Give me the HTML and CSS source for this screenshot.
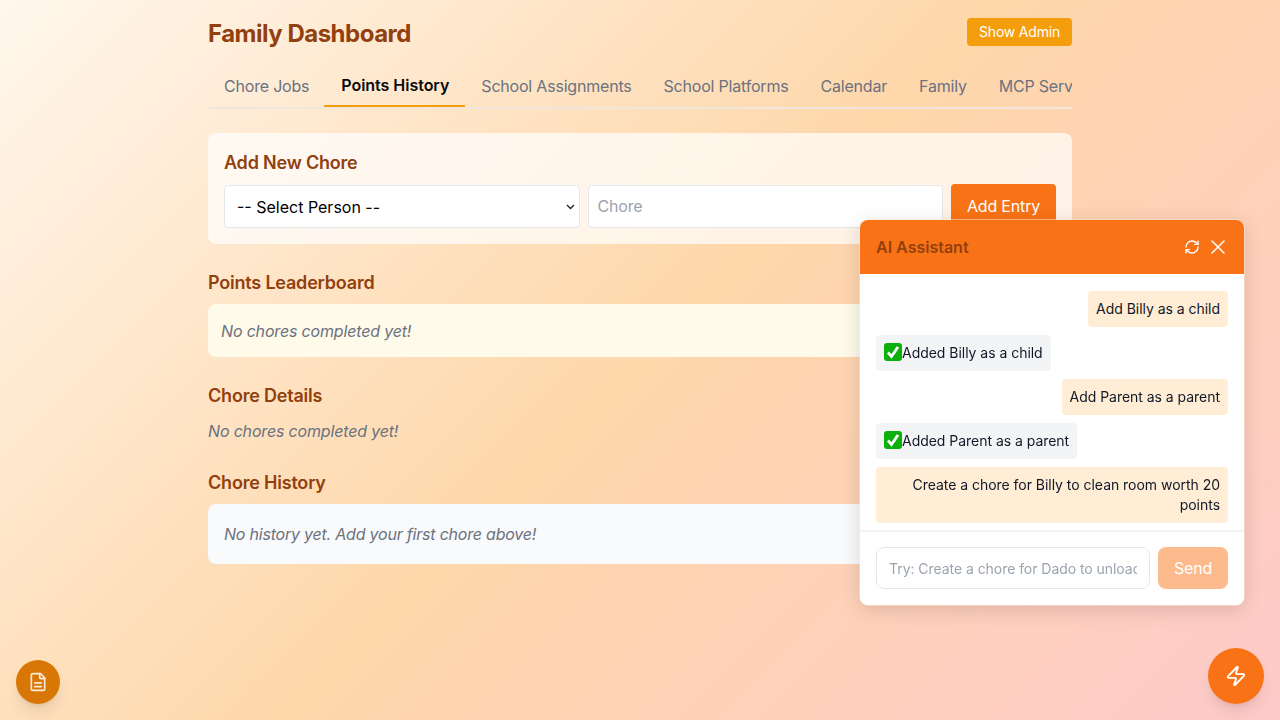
FILE: index.html
```html
<!DOCTYPE html>
<html lang="en">
<head>
    <meta charset="UTF-8">
    <meta name="viewport" content="width=device-width, initial-scale=1.0">
    <title>Family Dashboard</title>
    <link rel="stylesheet" href="styles.css">
</head>
<body>
    <div class="container">
        <header class="top">
            <h1>Family Dashboard</h1>
            <button class="admin-btn">Show Admin</button>
        </header>

        <nav class="tabs">
            <a class="tab">Chore Jobs</a>
            <a class="tab active">Points History</a>
            <a class="tab">School Assignments</a>
            <a class="tab">School Platforms</a>
            <a class="tab">Calendar</a>
            <a class="tab">Family</a>
            <a class="tab">MCP Servers</a>
        </nav>

        <section class="add-card">
            <h3>Add New Chore</h3>
            <form class="add-form">
                <select class="person-select">
                    <option>-- Select Person --</option>
                </select>
                <input class="chore-input" type="text" placeholder="Chore">
                <button class="add-btn" type="button">Add Entry</button>
            </form>
        </section>

        <section class="block">
            <h3>Points Leaderboard</h3>
            <div class="leaderboard"><em>No chores completed yet!</em></div>
        </section>

        <section class="block details-block">
            <h3>Chore Details</h3>
            <p class="empty"><em>No chores completed yet!</em></p>
        </section>

        <section class="block">
            <h3>Chore History</h3>
            <div class="history"><em>No history yet. Add your first chore above!</em></div>
        </section>
    </div>

    <!-- chat panel -->
    <aside class="chat">
        <div class="chat-head">
            <span class="chat-title">AI Assistant</span>
            <div class="chat-actions">
                <svg class="head-icon" viewBox="0 0 24 24"><path d="M3 12a9 9 0 0 1 9-9 9.75 9.75 0 0 1 6.74 2.74L21 8"/><path d="M21 3v5h-5"/><path d="M21 12a9 9 0 0 1-9 9 9.75 9.75 0 0 1-6.74-2.74L3 16"/><path d="M8 16H3v5"/></svg>
                <svg class="head-icon close" viewBox="0 0 24 24"><path d="M18 6 6 18"/><path d="m6 6 12 12"/></svg>
            </div>
        </div>
        <div class="chat-body">
            <div class="msg user">Add Billy as a child</div>
            <div class="msg bot"><svg class="tick" viewBox="0 0 18 18"><rect width="18" height="18" rx="3" fill="#0cb00c"/><path d="M4 9.5 7.5 13.5 14 4" fill="none" stroke="#fff" stroke-width="2.8"/></svg>Added Billy as a child</div>
            <div class="msg user">Add Parent as a parent</div>
            <div class="msg bot"><svg class="tick" viewBox="0 0 18 18"><rect width="18" height="18" rx="3" fill="#0cb00c"/><path d="M4 9.5 7.5 13.5 14 4" fill="none" stroke="#fff" stroke-width="2.8"/></svg>Added Parent as a parent</div>
            <div class="msg user">Create a chore for Billy to clean room worth 20 points</div>
        </div>
        <div class="chat-foot">
            <input class="chat-input" type="text" placeholder="Try: Create a chore for Dado to unload the dishwasher">
            <button class="send-btn" type="button">Send</button>
        </div>
    </aside>

    <button class="fab fab-doc">
        <svg viewBox="0 0 24 24"><path d="M15 2H6a2 2 0 0 0-2 2v16a2 2 0 0 0 2 2h12a2 2 0 0 0 2-2V7z"/><path d="M14 2v4a2 2 0 0 0 2 2h4"/><path d="M16 13H8"/><path d="M16 17.5H8"/></svg>
    </button>
    <button class="fab fab-ai">
        <svg viewBox="0 0 24 24"><path d="M4 14a1 1 0 0 1-.78-1.63l9.9-10.2a.5.5 0 0 1 .86.46l-1.92 6.02A1 1 0 0 0 13 10h7a1 1 0 0 1 .78 1.63l-9.9 10.2a.5.5 0 0 1-.86-.46l1.92-6.02A1 1 0 0 0 11 14z"/></svg>
    </button>
</body>
</html>
```

FILE: styles.css
```css
* {
    box-sizing: border-box;
}

html, body {
    height: 100%;
}

body {
    margin: 0;
    font-family: Inter, "Liberation Sans", sans-serif;
    background: linear-gradient(135deg, #fff7ed 0%, #fed7aa 50%, #fecaca 100%);
    overflow: hidden;
}

button, input, select {
    font-family: inherit;
}

.container {
    width: 864px;
    margin: 0 auto;
    padding-top: 18px;
}

.top {
    display: flex;
    justify-content: space-between;
    align-items: center;
    height: 28px;
    margin-bottom: 16px;
}

h1 {
    margin: 4px 0 0;
    font-size: 24px;
    line-height: 30px;
    font-weight: 700;
    letter-spacing: -0.5px;
    color: #92400e;
}

.admin-btn {
    height: 28px;
    width: 105px;
    padding: 0 0 1px;
    border: none;
    border-radius: 4px;
    background: #f59e0b;
    color: white;
    font-size: 14px;
    letter-spacing: -0.2px;
}

.tabs {
    display: flex;
    overflow: hidden;
    height: 47px;
    border-bottom: 2px solid #f0e6dc;
    margin-bottom: 24px;
}

.tab {
    flex: none;
    height: 45px;
    padding: 0 16px;
    font-size: 16px;
    line-height: 48px;
    letter-spacing: -0.2px;
    color: #6b7280;
}

.tab.active {
    margin-left: -1px;
    padding: 0 16px 0 17px;
    line-height: 46px;
    font-weight: 600;
    letter-spacing: -0.03px;
    color: #0a0a0a;
    border-bottom: 2px solid #f59e0b;
}

h3 {
    margin: 0;
    font-size: 18px;
    line-height: 24px;
    font-weight: 600;
    letter-spacing: -0.2px;
    color: #92400e;
}

.add-card {
    height: 111px;
    padding: 18px 16px 16px;
    margin-bottom: 27px;
    border-radius: 8px;
    background: rgba(255, 255, 255, 0.7);
}

.add-form {
    display: grid;
    grid-template-columns: 1fr 1fr 105px;
    gap: 8px;
    margin-top: 10px;
}

.person-select {
    width: 100%;
    height: 43px;
    padding: 0 12px;
    appearance: none;
    background: white url("data:image/svg+xml,%3Csvg xmlns='http://www.w3.org/2000/svg' width='9' height='6'%3E%3Cpath d='M1 1l3.5 3.5L8 1' fill='none' stroke='%23222' stroke-width='1.3'/%3E%3C/svg%3E") no-repeat right 4px center;
    border: 1px solid #e5e7eb;
    border-radius: 4px;
    color: #000;
    font-size: 16px;
}

.chore-input {
    width: 100%;
    height: 43px;
    padding: 0 9px 2px;
    background: white;
    border: 1px solid #e5e7eb;
    border-radius: 4px;
    font-size: 16px;
    letter-spacing: -0.17px;
}

.chore-input::placeholder {
    color: #9ca3af;
}

.add-btn {
    height: 44px;
    margin-top: -1px;
    border: none;
    border-radius: 4px;
    background: #f97316;
    color: white;
    font-size: 16px;
    letter-spacing: -0.17px;
}

.block {
    margin-bottom: 27px;
}

.details-block {
    margin-bottom: 28px;
}

.leaderboard {
    height: 53px;
    margin-top: 9px;
    padding: 0 13px;
    border-radius: 8px;
    background: #fffbeb;
    color: #6b7280;
    font-size: 16px;
    line-height: 55px;
    letter-spacing: -0.17px;
}

.empty {
    margin: 11px 0 0;
    color: #6b7280;
    font-size: 16px;
    line-height: 24px;
    letter-spacing: -0.17px;
}

.history {
    height: 60px;
    margin-top: 9px;
    padding: 0 16px;
    border-radius: 8px;
    background: #f9fafb;
    color: #6b7280;
    font-size: 16px;
    line-height: 60px;
    letter-spacing: -0.21px;
}

/* chat panel */
.chat {
    position: fixed;
    left: 860px;
    top: 220px;
    width: 384px;
    height: 385px;
    display: flex;
    flex-direction: column;
    overflow: hidden;
    background: white;
    border-radius: 8px;
    box-shadow: 0 0 0 1px rgba(255, 237, 213, 0.5), 0 4px 20px rgba(0, 0, 0, 0.15);
}

.chat-head {
    display: flex;
    justify-content: space-between;
    align-items: center;
    flex: none;
    height: 54px;
    padding: 0 14px 0 16px;
    background: #f97316;
}

.chat-title {
    font-size: 16px;
    font-weight: 600;
    color: #92400e;
}

.chat-actions {
    display: flex;
    align-items: center;
    gap: 6px;
}

.head-icon {
    display: block;
    width: 16px;
    height: 16px;
    fill: none;
    stroke: white;
    stroke-width: 2;
    stroke-linecap: round;
    stroke-linejoin: round;
}

.close {
    width: 24px;
    height: 24px;
    stroke-width: 1.5;
}

.chat-body {
    flex: 1;
    display: flex;
    flex-direction: column;
    gap: 8px;
    padding: 17px 16px 8px;
    overflow: hidden;
}

.msg {
    padding: 8px;
    border-radius: 4px;
    font-size: 14px;
    line-height: 20px;
    letter-spacing: -0.03px;
    color: #111827;
}

.user {
    align-self: flex-end;
    text-align: right;
    background: #ffedd5;
}

.bot {
    align-self: flex-start;
    background: #f3f4f6;
}

.tick {
    display: inline-block;
    width: 18px;
    height: 18px;
    vertical-align: -3px;
}

.chat-foot {
    flex: none;
    display: flex;
    gap: 8px;
    height: 75px;
    padding: 15px 16px;
    border-top: 2px solid #f3f4f6;
}

.chat-input {
    flex: 1;
    min-width: 0;
    height: 42px;
    padding: 0 12px;
    border: 1px solid #e5e7eb;
    border-radius: 8px;
    font-size: 14px;
    letter-spacing: -0.05px;
}

.chat-input::placeholder {
    color: #9ca3af;
}

.send-btn {
    flex: none;
    width: 70px;
    height: 42px;
    border: none;
    border-radius: 8px;
    background: #fdba8c;
    color: white;
    font-size: 16px;
    letter-spacing: -0.17px;
}

/* floating buttons */
.fab {
    position: fixed;
    bottom: 16px;
    display: flex;
    align-items: center;
    justify-content: center;
    padding: 0;
    border: none;
    border-radius: 50%;
    box-shadow: 0 10px 15px -3px rgba(0, 0, 0, 0.1), 0 4px 6px -4px rgba(0, 0, 0, 0.1);
}

.fab svg {
    fill: none;
    stroke: white;
    stroke-width: 2;
    stroke-linecap: round;
    stroke-linejoin: round;
}

.fab-doc {
    left: 16px;
    width: 44px;
    height: 44px;
    background: #d97706;
}

.fab-doc svg {
    width: 20px;
    height: 20px;
    opacity: 0.85;
}

.fab-ai {
    right: 16px;
    width: 56px;
    height: 56px;
    background: #f97316;
}

.fab-ai svg {
    width: 22px;
    height: 22px;
}
```
